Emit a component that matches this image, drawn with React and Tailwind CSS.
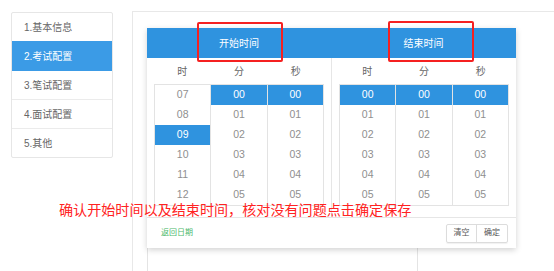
import React from "react";

const font = { fontFamily: '"Liberation Sans","Noto Sans CJK SC",sans-serif' };

function Col({ items, active, last }) {
  return (
    <div className={"flex-1 flex flex-col " + (last ? "" : "border-r border-[#e3e3e3]")}>
      {items.map((t) => (
        <div
          key={t}
          className={
            "h-[20px] flex items-center justify-center text-[10.5px] " +
            (t === active ? "bg-[#2f93df] text-white" : "text-[#8f8f8f]")
          }
        >
          {t}
        </div>
      ))}
    </div>
  );
}

function Panel({ hours, hActive, border }) {
  const mins = ["00", "01", "02", "03", "04", "05"];
  return (
    <div className={"flex-1 flex flex-col " + (border ? "border-l border-[#e6e6e6]" : "")}>
      <div className="h-[26px] flex items-center px-[7px] text-[10px] text-[#666]">
        <div className="flex-1 text-center">时</div>
        <div className="flex-1 text-center">分</div>
        <div className="flex-1 text-center">秒</div>
      </div>
      <div className="mx-[7px] flex border border-[#e3e3e3] h-[122px] overflow-hidden">
        <Col items={hours} active={hActive} />
        <Col items={mins} active="00" />
        <Col items={mins} active="00" last />
      </div>
    </div>
  );
}

export default function App() {
  const sideItems = [
    ["1.基本信息", "h-[28px]", false],
    ["2.考试配置", "h-[30px]", true],
    ["3.笔试配置", "h-[28px]", false],
    ["4.面试配置", "h-[29px]", false],
    ["5.其他", "h-[29px]", false],
  ];
  return (
    <div className="relative w-[554px] h-[271px] bg-white overflow-hidden flex items-start pt-[11px]" style={font}>
      <div className="ml-[11px] mt-[1px] w-[102px] border border-[#e6e6e6] rounded-[2px] flex flex-col">
        {sideItems.map(([t, h, a], i) => (
          <div
            key={t}
            className={
              h +
              " flex items-center pl-[12px] text-[10px] " +
              (a ? "bg-[#3b9be6] text-white" : "text-[#666] ") +
              (i > 0 && !a && !sideItems[i - 1][2] ? " border-t border-[#ebebeb]" : "")
            }
          >
            {t}
          </div>
        ))}
      </div>
      <div className="ml-[19px] flex-1 h-[270px] border-l border-t border-[#e8e8e8]">
        <div className="ml-[14px] mt-[224px] w-[271px] h-[60px] border border-[#e4e4e4]" />
      </div>

      {/* date-time picker popup */}
      <div className="absolute left-[147px] top-[28px] w-[369px] h-[220px] bg-white flex flex-col shadow-[0_2px_6px_rgba(0,0,0,0.18)]">
        <div className="h-[30px] bg-[#2f93df] flex text-white text-[10px]">
          <div className="w-[184px] flex items-center justify-center">开始时间</div>
          <div className="flex-1 flex items-center justify-center">结束时间</div>
        </div>
        <div className="flex h-[159px]">
          <Panel hours={["07", "08", "09", "10", "11", "12"]} hActive="09" />
          <Panel hours={["00", "01", "02", "03", "04", "05"]} hActive="00" border />
        </div>
        <div className="flex-1 border-t border-[#e6e6e6] flex items-center justify-between pl-[14px] pr-[8px]">
          <span className="text-[8px] text-[#4cb96b]">返回日期</span>
          <div className="flex border border-[#dcdcdc] rounded-[2px] shadow-[0_1px_1px_rgba(0,0,0,0.06)]">
            <div className="w-[30px] h-[17px] flex items-center justify-center text-[8px] text-[#555] border-r border-[#dcdcdc]">清空</div>
            <div className="w-[30px] h-[17px] flex items-center justify-center text-[8px] text-[#555]">确定</div>
          </div>
        </div>
      </div>

      {/* annotation overlays */}
      <div className="absolute left-[197px] top-[22px] w-[86px] h-[40px] border-2 border-[#f52020] rounded-[2px]" />
      <div className="absolute left-[388px] top-[21px] w-[86px] h-[41px] border-2 border-[#f52020] rounded-[2px]" />
      <div className="absolute left-[59px] top-[201px] text-[14.1px] leading-[18px] text-[#ff2222] whitespace-nowrap">
        确认开始时间以及结束时间，核对没有问题点击确定保存
      </div>
    </div>
  );
}
